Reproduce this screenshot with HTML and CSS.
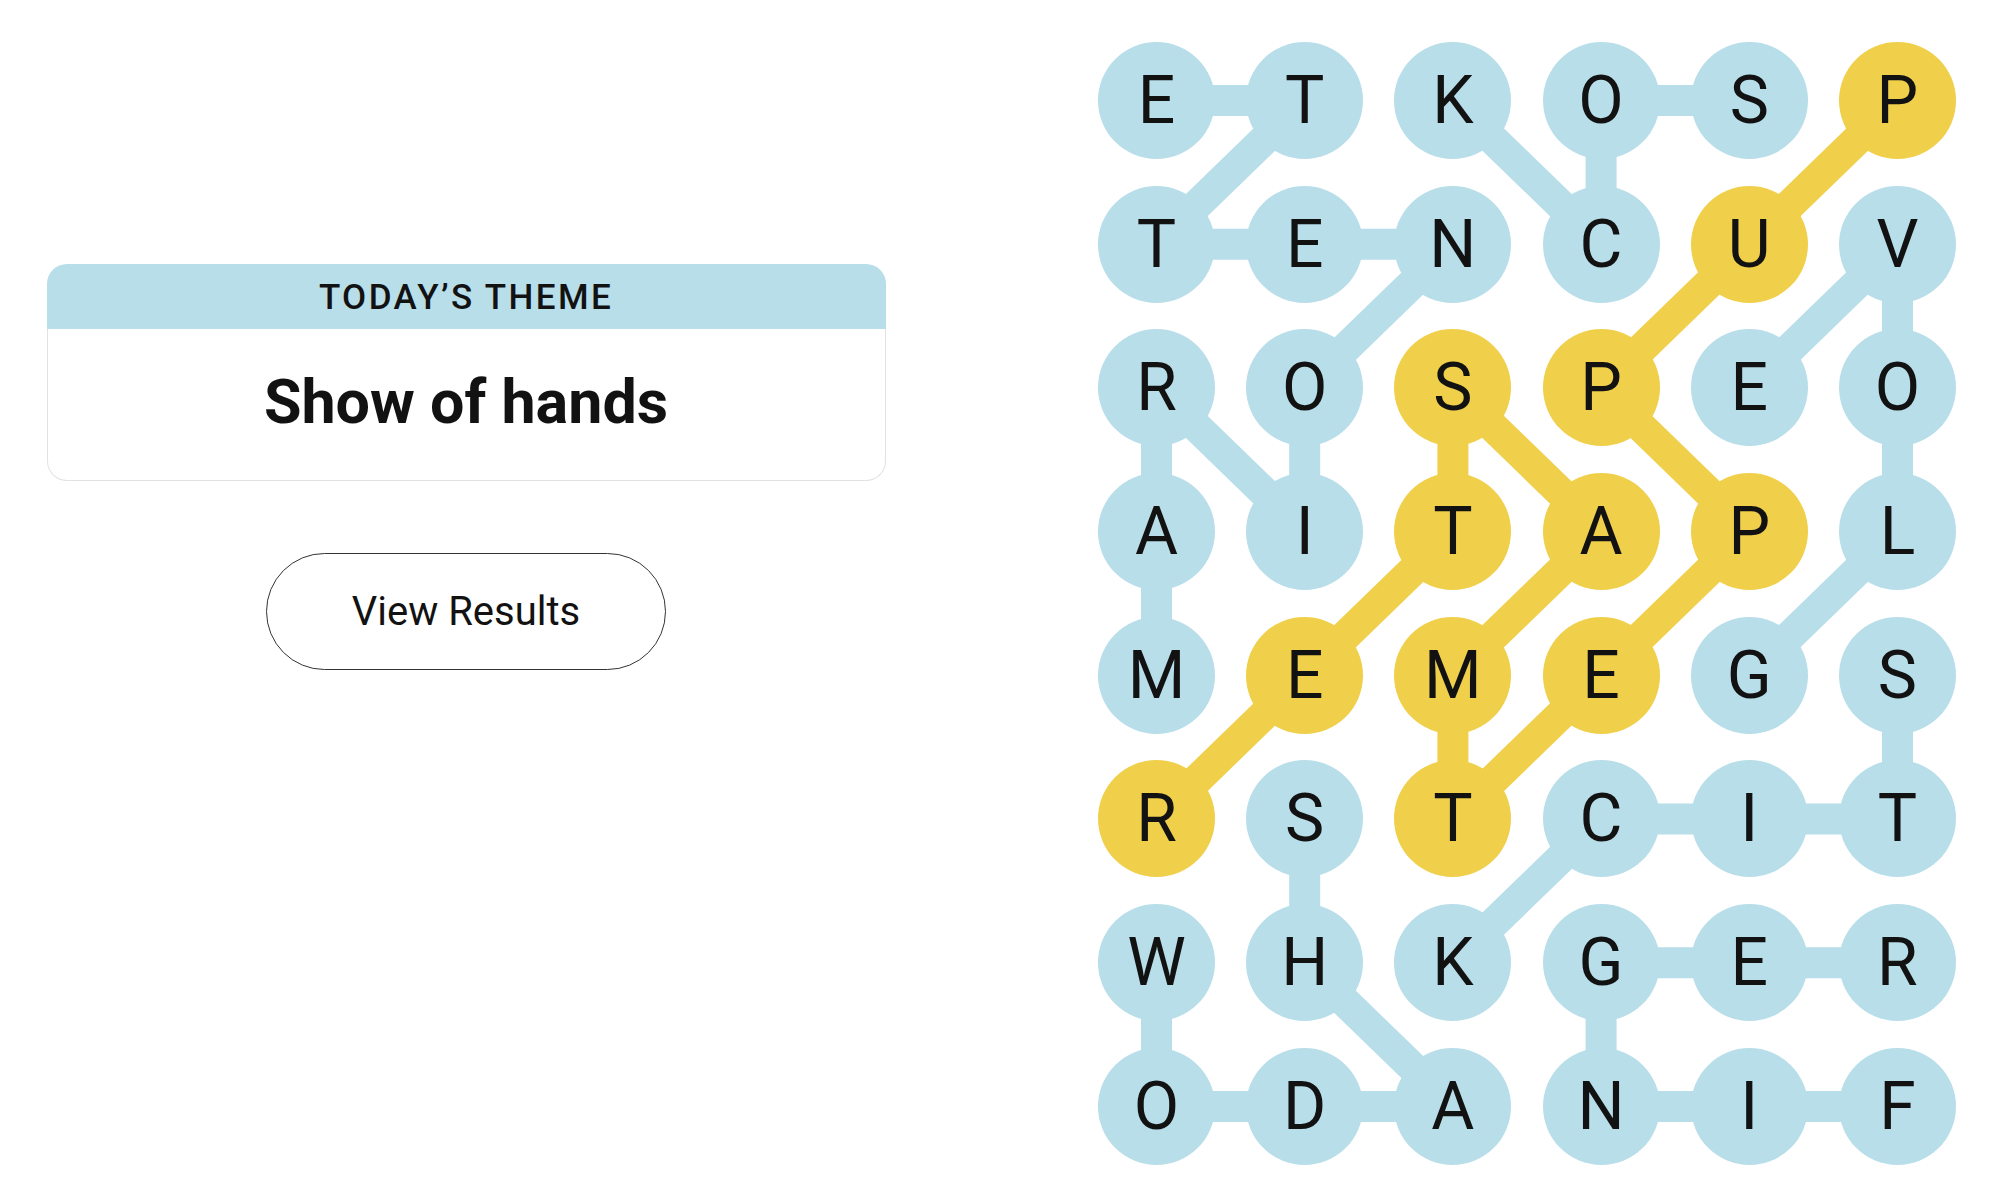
FILE: index.html
```html
<!DOCTYPE html>
<html lang="en">
<head>
  <meta charset="UTF-8">
  <meta name="viewport" content="width=device-width, initial-scale=1.0">
  <title>Strands</title>
  <link rel="stylesheet" href="styles.css">
</head>
<body>
  <main class="game">
    <section class="sidebar">
      <div class="theme-card">
        <div class="theme-card__label">TODAY’S THEME</div>
        <div class="theme-card__title">Show of hands</div>
      </div>
      <button class="results-btn" id="results-btn">View Results</button>
    </section>

    <section class="board" id="board">
      <svg class="board__lines" id="board-lines" xmlns="http://www.w3.org/2000/svg"></svg>
    </section>
  </main>

  <script>
    const ROWS = [
      'ETKOSP',
      'TENCUV',
      'ROSPEO',
      'AITAPL',
      'MEMEGS',
      'RSTCIT',
      'WHKGER',
      'ODANIF'
    ];

    // found words, as [row, col] chains in the order they were traced
    const WORDS = [
      { spangram: true, cells: [[0,5],[1,4],[2,3],[3,4],[4,3],[5,2],[4,2],[3,3],[2,2],[3,2],[4,1],[5,0]] },
      { cells: [[4,0],[3,0],[2,0],[3,1],[2,1],[1,2],[1,1],[1,0],[0,1],[0,0]] },
      { cells: [[0,4],[0,3],[1,3],[0,2]] },
      { cells: [[4,4],[3,5],[2,5],[1,5],[2,4]] },
      { cells: [[4,5],[5,5],[5,4],[5,3],[6,2]] },
      { cells: [[5,1],[6,1],[7,2],[7,1],[7,0],[6,0]] },
      { cells: [[7,5],[7,4],[7,3],[6,3],[6,4],[6,5]] }
    ];

    const SIZE = 117;
    const COL_STEP = 148.2;
    const ROW_STEP = 143.7;

    const board = document.getElementById('board');
    const lines = document.getElementById('board-lines');
    const spanCells = new Set();

    WORDS.forEach(word => {
      if (word.spangram) word.cells.forEach(([r, c]) => spanCells.add(r + ',' + c));
      const pts = word.cells
        .map(([r, c]) => `${SIZE / 2 + c * COL_STEP},${SIZE / 2 + r * ROW_STEP}`)
        .join(' ');
      const line = document.createElementNS('http://www.w3.org/2000/svg', 'polyline');
      line.setAttribute('points', pts);
      line.setAttribute('class', word.spangram ? 'link link--spangram' : 'link');
      lines.appendChild(line);
    });

    ROWS.forEach((row, r) => {
      [...row].forEach((letter, c) => {
        const cell = document.createElement('div');
        cell.className = spanCells.has(r + ',' + c) ? 'cell cell--spangram' : 'cell';
        cell.textContent = letter;
        board.appendChild(cell);
      });
    });
  </script>
</body>
</html>
```

FILE: styles.css
```css
*, *::before, *::after { box-sizing: border-box; }
html, body {
  margin: 0; padding: 0;
  background: #fff;
  color: #121212;
  font-family: Roboto, 'Liberation Sans', sans-serif;
}
.game {
  display: flex;
  align-items: flex-start;
}

/* left column: theme card + results button */
.sidebar {
  width: 932px;
  flex: none;
  display: flex;
  flex-direction: column;
  align-items: center;
  padding-top: 264px;
}
.theme-card {
  width: 839px;
}
.theme-card__label {
  height: 65px;
  display: flex;
  align-items: center;
  justify-content: center;
  padding-top: 2px;
  background: #b8deea;
  border-radius: 20px 20px 0 0;
  font-size: 35px;
  font-weight: 500;
  letter-spacing: 2.4px;
}
.theme-card__title {
  height: 152px;
  display: flex;
  align-items: center;
  justify-content: center;
  padding-bottom: 6px;
  border: 1.5px solid #e2e2e2;
  border-top: none;
  border-radius: 0 0 20px 20px;
  font-size: 61px;
  font-weight: 700;
}
.results-btn {
  margin-top: 72px;
  width: 400px;
  height: 117px;
  border: 1.5px solid #333;
  border-radius: 60px;
  background: #fff;
  color: #121212;
  font-family: inherit;
  font-size: 40px;
  cursor: pointer;
}

/* letter grid */
.board {
  position: relative;
  margin: 42px 0 0 166px;
  display: grid;
  grid-template-columns: repeat(6, 117px);
  grid-auto-rows: 117px;
  column-gap: 31.2px;
  row-gap: 26.7px;
}
.board__lines {
  position: absolute;
  top: 0; left: 0;
  width: 100%;
  height: 100%;
  overflow: visible;
}
.link {
  fill: none;
  stroke: #b8deea;
  stroke-width: 31;
  stroke-linejoin: round;
}
.link--spangram {
  stroke: #f0cf4a;
}
.cell {
  position: relative;
  width: 117px;
  height: 117px;
  border-radius: 50%;
  background: #b8deea;
  display: flex;
  align-items: center;
  justify-content: center;
  font-size: 66px;
}
.cell--spangram {
  background: #f0cf4a;
}
```
